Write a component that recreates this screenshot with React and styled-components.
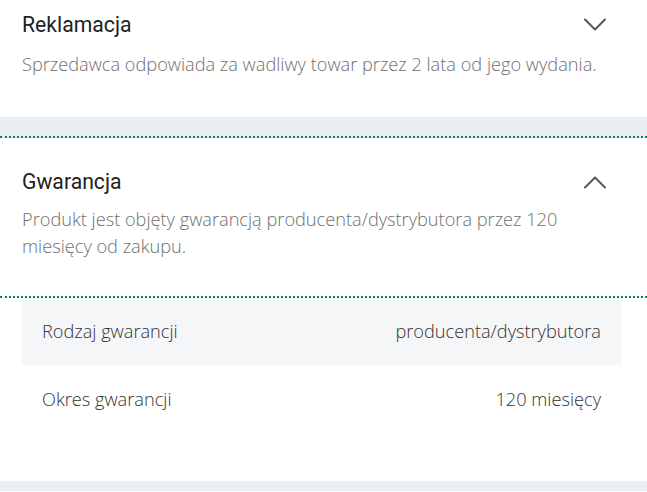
import React from "react";
import styled, { createGlobalStyle } from "styled-components";

const Global = createGlobalStyle`
  html, body { margin: 0; padding: 0; background: #fff; }
  body { font-family: "Open Sans", sans-serif; }
`;

const Page = styled.div`
  width: 647px;
  background: #fff;
`;

const Section = styled.section`
  padding: ${(p) => (p.$top ? "12px" : "31px")} 40px ${(p) => p.$bottom}px 22px;
  border-bottom: ${(p) => (p.$dotted ? "2px dotted #00806a" : "none")};
`;

const Header = styled.div`
  display: flex;
  align-items: center;
  justify-content: space-between;
  height: 26px;
`;

const Title = styled.h3`
  margin: 0;
  font-family: Roboto, sans-serif;
  font-weight: 400;
  font-size: 21.2px;
  line-height: 26px;
  color: #222;
`;

const Desc = styled.p`
  margin: ${(p) => p.$gap}px 0 0;
  font-family: "Open Sans", sans-serif;
  font-weight: 300;
  font-size: 18.2px;
  line-height: 27.5px;
  color: #6f6f6f;
`;

const Band = styled.div`
  height: ${(p) => p.$h}px;
  background: #eceff1;
  border-bottom: ${(p) => (p.$dotted ? "2px dotted #00806a" : "none")};
`;

const Table = styled.div`
  padding: 0 26px 48px 22px;
`;

const Row = styled.div`
  display: flex;
  align-items: center;
  justify-content: space-between;
  height: 67.5px;
  padding: 0 20px;
  background: ${(p) => (p.$shaded ? "#f5f6f7" : "#fff")};
  font-family: "Open Sans", sans-serif;
  font-weight: 300;
  font-size: 18.2px;
  color: #333;
`;

const Chevron = ({ up }) => (
  <svg width="24" height="14" viewBox="0 0 24 14" fill="none">
    <path
      d={up ? "M2 12.5 L12 2.5 L22 12.5" : "M2 1.5 L12 11.5 L22 1.5"}
      stroke="#555"
      strokeWidth="2"
      strokeLinecap="round"
      strokeLinejoin="round"
    />
  </svg>
);

export default function App() {
  return (
    <Page>
      <Global />
      <Section $top $bottom={38}>
        <Header>
          <Title>Reklamacja</Title>
          <Chevron />
        </Header>
        <Desc $gap={13}>Sprzedawca odpowiada za wadliwy towar przez 2 lata od jego wydania.</Desc>
      </Section>
      <Band $h={19} $dotted />
      <Section $bottom={35} $dotted>
        <Header>
          <Title>Gwarancja</Title>
          <Chevron up />
        </Header>
        <Desc $gap={11}>
          Produkt jest objęty gwarancją producenta/dystrybutora przez 120 miesięcy od zakupu.
        </Desc>
      </Section>
      <Table>
        <Row $shaded>
          <span>Rodzaj gwarancji</span>
          <span>producenta/dystrybutora</span>
        </Row>
        <Row>
          <span>Okres gwarancji</span>
          <span>120 miesięcy</span>
        </Row>
      </Table>
      <Band $h={10} />
    </Page>
  );
}
